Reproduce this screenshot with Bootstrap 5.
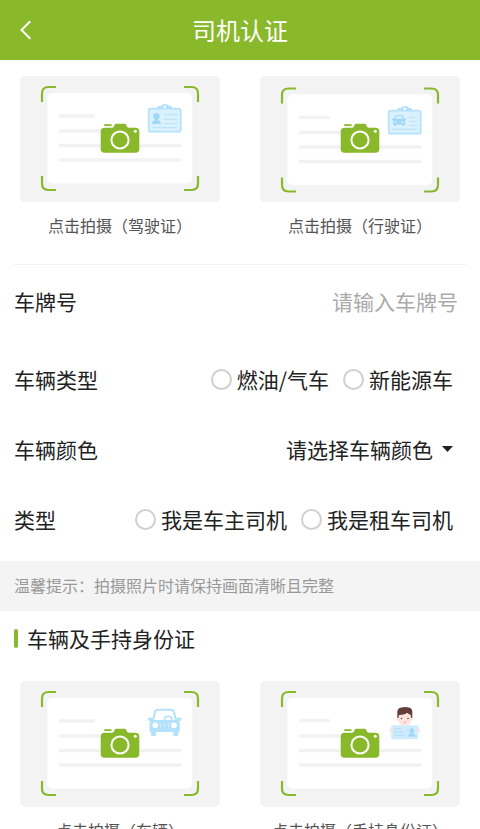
<!DOCTYPE html>
<html lang="zh-CN">
<head>
<meta charset="utf-8">
<meta name="viewport" content="width=device-width, initial-scale=1">
<title>司机认证</title>
<link href="https://cdn.jsdelivr.net/npm/bootstrap@5.3.0/dist/css/bootstrap.min.css" rel="stylesheet">
<style>
  :root { --leaf: #89b82b; --ink: #222; --pale: #f3f3f3; }
  body { font-family: "Noto Sans CJK SC", sans-serif; color: var(--ink); background: #fff; }
  .topbar { background: var(--leaf); height: 60px; padding: 0 20px; }
  .topbar h1 { font-size: 24px; line-height: 36px; font-weight: 400; }
  .side { width: 24px; height: 24px; }
  .scroller { scrollbar-width: none; }
  .scroller::-webkit-scrollbar { display: none; }
  .shot { padding: 0 20px; color: #555; font-size: 16px; line-height: 24px; }
  .shot svg { background: var(--pale); border-radius: 5px; margin-bottom: 11px; }
  .rule { margin: 27px 14px 0; border-top: 1px solid #f2f2f2; opacity: 1; }
  .line-item { min-height: 70px; padding: 0 27px 0 14px; font-size: 21px; line-height: 32px; }
  .plate-line { min-height: 72px; margin-bottom: 7px; padding-right: 22px; }
  .plate-line input { font-size: 21px; line-height: 32px; }
  .plate-line input::placeholder { color: #aaa; }
  .form-check-input.dot { width: 21px; height: 21px; margin: 0; border: 2px solid #d0d0d0; }
  .form-check-input.dot:checked { background-color: var(--leaf); border-color: var(--leaf); }
  .choices { gap: 14px; }
  .choice { gap: 5px; }
  .form-select.color-pick {
    font-size: 21px; line-height: 32px; color: var(--ink); padding: 0 20px 0 0;
    background-image: url("data:image/svg+xml,%3csvg xmlns='http://www.w3.org/2000/svg' viewBox='0 0 11 6'%3e%3cpath fill='%23222' d='M0 0h11L5.500 6z'/%3e%3c/svg%3e");
    background-size: 11px 6px; background-position: right center;
  }
  .tip { margin-top: 7px; min-height: 50px; padding: 0 14px 2px; background: #f4f4f4; color: #999; font-size: 16px; line-height: 24px; }
  .section-title { font-size: 21px; line-height: 32px; font-weight: 400; padding: 11px 14px 0; margin: 0 0 27px; gap: 9px; }
  .tick { width: 4px; height: 19px; border-radius: 2px; background: var(--leaf); }
</style>
<script src="https://cdn.jsdelivr.net/npm/bootstrap@5.3.0/dist/js/bootstrap.bundle.min.js"></script>
</head>
<body>
<svg class="d-none" aria-hidden="true">
  <symbol id="frame" viewBox="0 0 200 126">
    <rect x="27.300" y="17" width="145" height="90.500" rx="5" fill="#fff"/>
    <g fill="none" stroke="#89b82b" stroke-width="2.200">
      <path d="M22 26v-8.500q0-6.500 6.500-6.500H36M164 11h7.500q6.500 0 6.500 6.500V26M22 100v7.500q0 6.500 6.500 6.500H36M164 114h7.500q6.500 0 6.500-6.500V100"/>
    </g>
    <path d="M40.500 55h45M40.500 69.500H160M40.500 84H160" stroke="#f2f2f2" stroke-width="3.600" stroke-linecap="round"/>
  </symbol>
  <symbol id="camera" viewBox="0 0 200 126">
    <g fill="#89b82b">
      <path d="M84.500 51.800H92q1.800 0 2.200-1.800l.3-1q.5-1.200 1.700-1.200h8.400q1.300 0 1.700 1.200l.4 1q.5 1.800 2.200 1.800h6.600q3.800 0 3.800 3.800V73q0 3.800-3.800 3.800h-31q-3.800 0-3.800-3.800V55.600q0-3.800 3.800-3.800z"/>
      <rect x="84" y="48.200" width="7.800" height="1.800" rx=".9"/>
    </g>
    <circle cx="100" cy="64" r="8.600" fill="none" stroke="#fff" stroke-width="2"/>
    <circle cx="115.300" cy="55.300" r="1.500" fill="#fff"/>
  </symbol>
  <symbol id="badge-base" viewBox="0 0 200 126">
    <path d="M137.300 33.500v-2.200q0-1.300 1.300-1.300h2.200q.6-1.700 2.400-1.700h3.400q1.800 0 2.400 1.700h1.700q1.300 0 1.300 1.300v2.200z" fill="#b4e1fb"/>
    <rect x="128.700" y="32.700" width="32" height="23" rx="2" fill="#dcf1fe" stroke="#b4e1fb" stroke-width="1.700"/>
    <circle cx="144.800" cy="31" r="1.200" fill="#fff"/>
  </symbol>
</svg>

<div class="d-flex flex-column vh-100">
  <header class="topbar d-flex align-items-center justify-content-between flex-shrink-0 text-white">
    <button type="button" class="side btn p-0 border-0 d-flex align-items-center text-white" aria-label="返回">
      <svg width="12" height="20" viewBox="0 0 12 20" fill="none" stroke="currentColor" stroke-width="2"><path d="M10.300 1.200 1.500 10l8.800 8.800"/></svg>
    </button>
    <h1 class="m-0">司机认证</h1>
    <span class="side"></span>
  </header>

  <main class="scroller flex-grow-1 overflow-auto">
    <div class="row g-0 pt-3">
      <div class="col-6">
        <button type="button" class="shot btn border-0 rounded-0 w-100 d-block">
          <svg class="w-100 d-block" viewBox="0 0 200 126" aria-hidden="true">
            <use href="#frame"/>
            <path d="M40.500 40H73.500" stroke="#f2f2f2" stroke-width="3.600" stroke-linecap="round"/>
            <use href="#camera"/><use href="#badge-base"/>
            <g fill="#9fd7f9"><circle cx="136.400" cy="40.300" r="3.200"/><path d="M135 42h3v2.200q2.800.4 2.800 2.500v1.300h-8.600v-1.300q0-2.100 2.800-2.500z"/></g>
            <path d="M143.500 38.700h13.800M143.500 43.200h13.800M143.500 47.700h13.800M132.300 51.700h25" stroke="#b4e1fb" stroke-width="1"/>
          </svg>
          点击拍摄（驾驶证）
        </button>
      </div>
      <div class="col-6">
        <button type="button" class="shot btn border-0 rounded-0 w-100 d-block">
          <svg class="w-100 d-block" viewBox="0 0 200 126" aria-hidden="true">
            <g transform="translate(0 1.500)"><use href="#frame"/><path d="M40.500 40H68" stroke="#f2f2f2" stroke-width="3.600" stroke-linecap="round"/></g>
            <use href="#camera"/>
            <g transform="translate(0 2)"><use href="#badge-base"/></g>
            <path fill="#9fd7f9" fill-rule="evenodd" d="M135.500 39.200h7l1.600 3.500 1.900-.4v1.400l-1.200.5.500 1.200v3h-1.100v1.300h-2.400v-1.300h-5.400v1.300H134v-1.300h-1.100v-3l.4-1.200-1.200-.5v-1.400l1.900.4zM136.300 40.300l-.8 2.400h7l-.8-2.400zM134.500 45.300v1.800h2v-1.800zM141.500 45.300v1.800h2v-1.800z"/>
            <path d="M149.300 41.300h8M149.300 45.300h8M149.300 49.300h8M132.300 53.300h25" stroke="#b4e1fb" stroke-width="1"/>
          </svg>
          点击拍摄（行驶证）
        </button>
      </div>
    </div>

    <hr class="rule">

    <form>
      <div class="line-item plate-line d-flex align-items-center">
        <label for="plate" class="flex-shrink-0">车牌号</label>
        <input id="plate" type="text" class="form-control border-0 rounded-0 p-0 text-end" placeholder="请输入车牌号">
      </div>

      <div class="line-item d-flex align-items-center justify-content-between" role="radiogroup" aria-labelledby="fuel-label">
        <span id="fuel-label">车辆类型</span>
        <div class="choices d-flex">
          <div class="choice d-flex align-items-center">
            <input class="form-check-input dot" type="radio" name="fuel" id="fuel-gas"><label for="fuel-gas">燃油/气车</label>
          </div>
          <div class="choice d-flex align-items-center">
            <input class="form-check-input dot" type="radio" name="fuel" id="fuel-new"><label for="fuel-new">新能源车</label>
          </div>
        </div>
      </div>

      <div class="line-item d-flex align-items-center justify-content-between">
        <label for="color">车辆颜色</label>
        <select id="color" class="form-select color-pick w-auto border-0 rounded-0">
          <option>请选择车辆颜色</option>
        </select>
      </div>

      <div class="line-item d-flex align-items-center justify-content-between" role="radiogroup" aria-labelledby="role-label">
        <span id="role-label">类型</span>
        <div class="choices d-flex">
          <div class="choice d-flex align-items-center">
            <input class="form-check-input dot" type="radio" name="role" id="role-owner"><label for="role-owner">我是车主司机</label>
          </div>
          <div class="choice d-flex align-items-center">
            <input class="form-check-input dot" type="radio" name="role" id="role-rent"><label for="role-rent">我是租车司机</label>
          </div>
        </div>
      </div>
    </form>

    <div class="tip d-flex align-items-center">温馨提示：拍摄照片时请保持画面清晰且完整</div>

    <h2 class="section-title d-flex align-items-center"><span class="tick"></span>车辆及手持身份证</h2>

    <div class="row g-0 pb-3">
      <div class="col-6">
        <button type="button" class="shot btn border-0 rounded-0 w-100 d-block">
          <svg class="w-100 d-block" viewBox="0 0 200 126" aria-hidden="true">
            <use href="#frame"/>
            <path d="M40.500 40H73.500" stroke="#f2f2f2" stroke-width="3.600" stroke-linecap="round"/>
            <use href="#camera"/>
            <path d="M132.800 40l2.200-9q.6-2.200 2.800-2.200h13.400q2.200 0 2.800 2.200l2.200 9" fill="#fff" stroke="#b4e1fb" stroke-width="2"/>
            <path d="M144.300 39.500q0-4.300 3.800-4.300t4.200 4.300" fill="none" stroke="#b4e1fb" stroke-width="1.500"/>
            <path d="M127.800 37.800q0-1.400 1.400-1.400h2q1 0 1.300 1.200l.4 1.400h23.500l.4-1.400q.3-1.200 1.300-1.200h2q1.400 0 1.400 1.400 0 2.200-2.400 2.400.7 1.500.7 3.500v6q0 1.500-1.500 1.500v2.300q0 1.500-1.500 1.500h-2q-1.500 0-1.500-1.500V51h-17.300v2.500q0 1.500-1.500 1.500h-2q-1.500 0-1.500-1.500v-2.300q-1.500 0-1.500-1.500v-6q0-2 .7-3.500-2.400-.2-2.400-2.400z" fill="#b4e1fb"/>
            <g fill="#fff"><circle cx="135.300" cy="44.300" r="2.800"/><circle cx="154" cy="44.300" r="2.800"/></g>
            <path d="M141 42.300q-1 2 0 4M144.600 42.300v4M148.300 42.300q1 2 0 4" fill="none" stroke="#dcf1fe" stroke-width=".9"/>
          </svg>
          点击拍摄（车辆）
        </button>
      </div>
      <div class="col-6">
        <button type="button" class="shot btn border-0 rounded-0 w-100 d-block">
          <svg class="w-100 d-block" viewBox="0 0 200 126" aria-hidden="true">
            <use href="#frame"/>
            <path d="M40.500 39.500H68" stroke="#f2f2f2" stroke-width="3.600" stroke-linecap="round"/>
            <use href="#camera"/>
            <g fill="#fce3de"><circle cx="137.800" cy="38" r="1.500"/><circle cx="151.500" cy="38" r="1.500"/><path d="M138 33h13.300v5.500q0 6-6.600 6t-6.700-6z"/></g>
            <path d="M137.300 37v-6q0-4 4-4.500 4.500-1 7.500 0 3.500.5 3.500 4.500v6l-1.500-.5V34q-2.300-.8-3.500-2-3.500 2.200-8.500 2v2.500z" fill="#633f3b"/>
            <g fill="#4f3835"><circle cx="141.500" cy="37.500" r=".7"/><circle cx="148" cy="37.500" r=".7"/></g>
            <path d="M143.600 41.200q1.200.8 2.300 0" fill="none" stroke="#ef8f8f" stroke-width=".8"/>
            <rect x="131.200" y="44.300" width="27" height="14" rx="1.200" fill="#cfebfd"/>
            <g fill="#fce3de"><ellipse cx="131" cy="49.500" rx="1.500" ry="2.400"/><ellipse cx="158.500" cy="49.500" rx="1.500" ry="2.400"/></g>
            <path d="M134 47.700h7M134 51h9.500M134 54.300h10.500" stroke="#aedefa" stroke-width="1"/>
            <g fill="#9fd7f9"><circle cx="151.700" cy="49.500" r="2.300"/><path d="M150.700 51h2v1.500q2.600.4 2.600 2.500v.5h-7.200V55q0-2.100 2.600-2.500z"/></g>
          </svg>
          点击拍摄（手持身份证）
        </button>
      </div>
    </div>
  </main>
</div>
</body>
</html>
